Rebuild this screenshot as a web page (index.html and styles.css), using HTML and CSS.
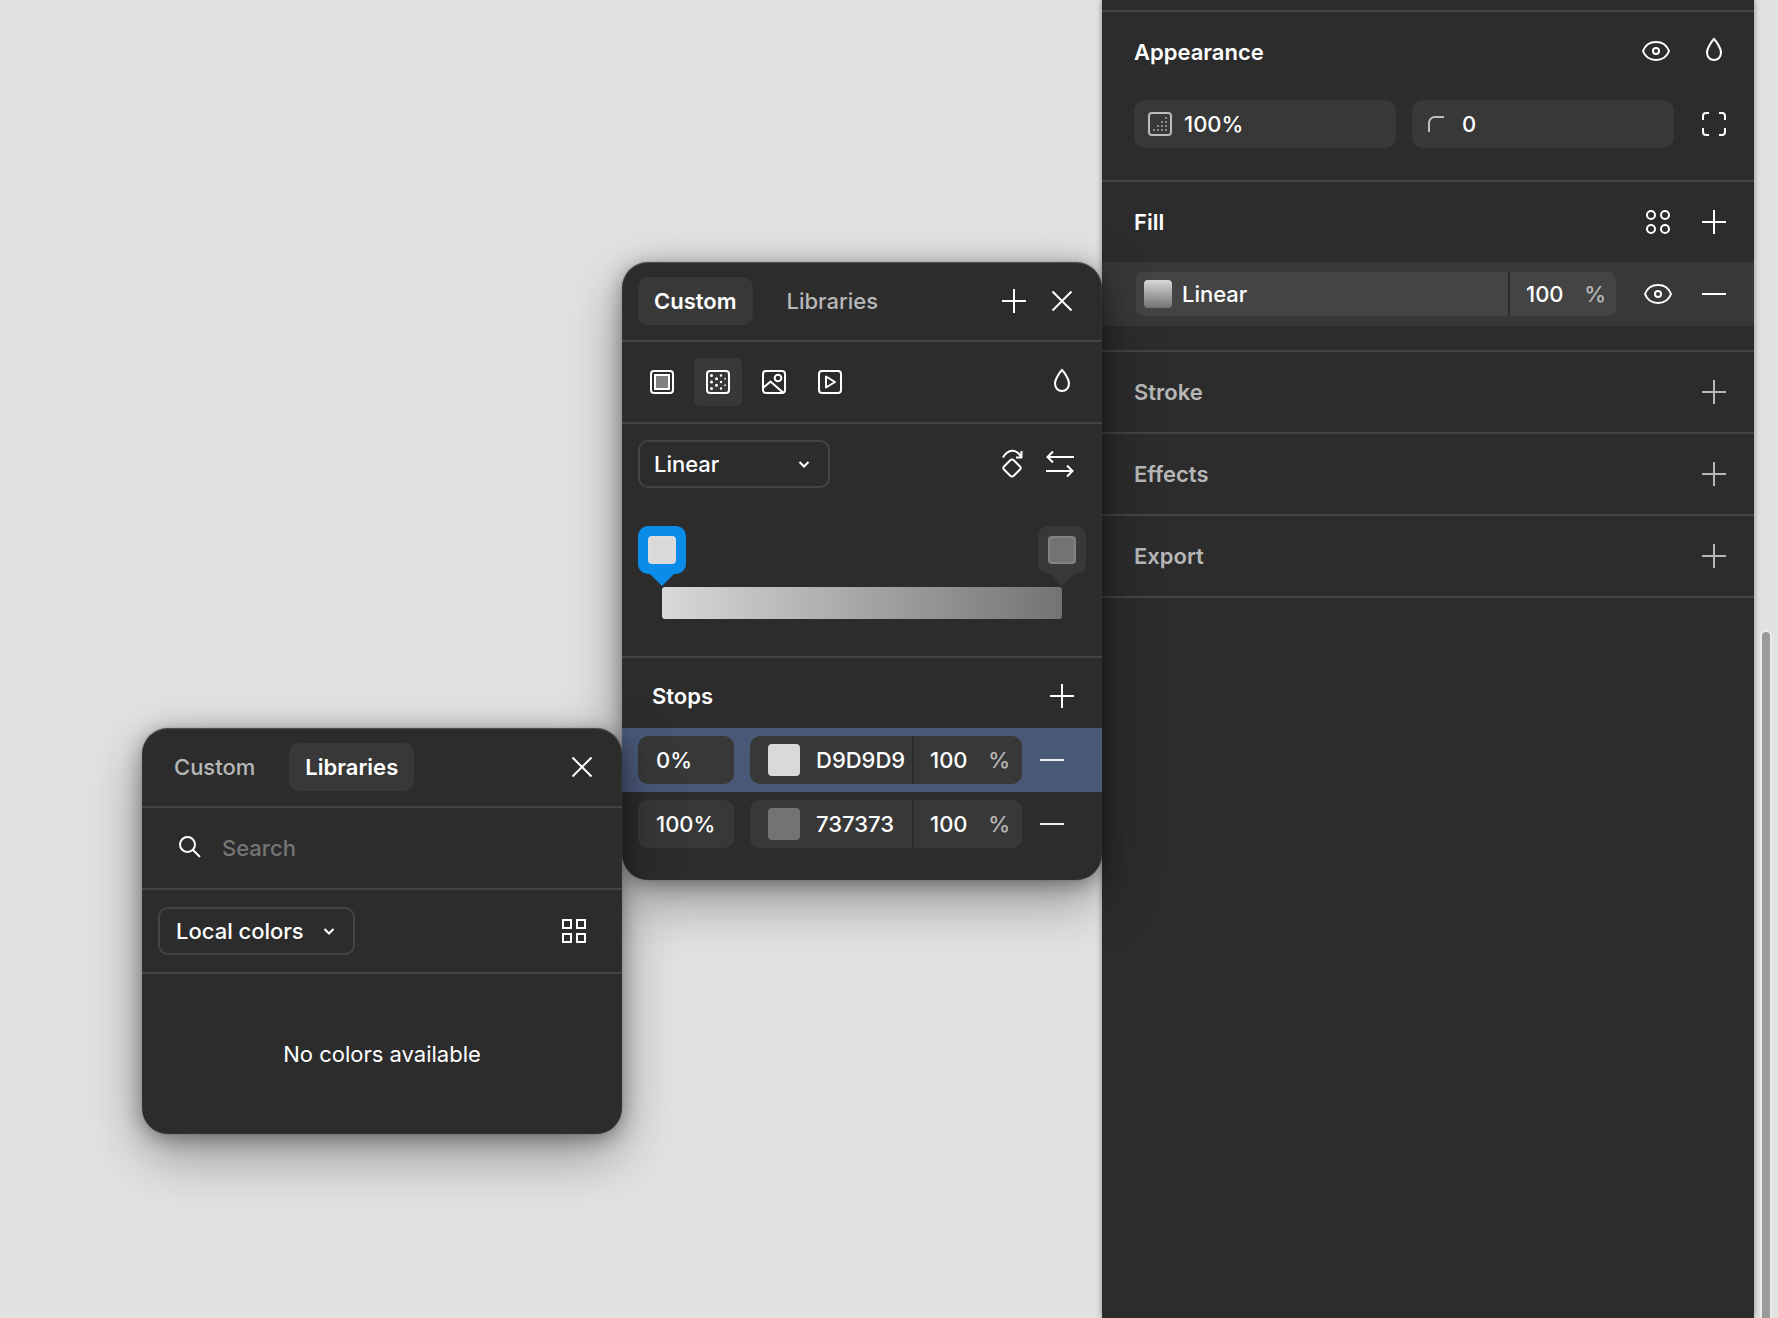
FILE: index.html
```html
<!DOCTYPE html>
<html lang="en">
<head>
<meta charset="utf-8">
<meta name="viewport" content="width=device-width, initial-scale=1">
<title>Fill editor</title>
<link rel="stylesheet" href="styles.css">
</head>
<body>
<svg class="sprite" aria-hidden="true">
  <symbol id="plus" viewBox="0 0 48 48"><path d="M24 12v24M12 24h24"/></symbol>
  <symbol id="minus" viewBox="0 0 48 48"><path d="M12 24h24"/></symbol>
  <symbol id="close" viewBox="0 0 48 48"><path d="M14.500 14.500l19 19M33.500 14.500l-19 19"/></symbol>
  <symbol id="eye" viewBox="0 0 48 48"><path d="M11 24C13 18.500 18 15 24 15s11 3.500 13 9c-2 5.500-7 9-13 9s-11-3.500-13-9z"/><circle cx="24" cy="24" r="3"/></symbol>
  <symbol id="drop" viewBox="0 0 48 48"><path d="M24 12c-1.500 1.500-7 8.500-7 13.500 0 4.500 3 7.500 7 7.500s7-3 7-7.500c0-5-5.500-12-7-13.500z"/></symbol>
  <symbol id="corners" viewBox="0 0 48 48"><path d="M13 20v-4a3 3 0 0 1 3-3h3M29 13h3a3 3 0 0 1 3 3v4M35 28v4a3 3 0 0 1-3 3h-3M19 35h-3a3 3 0 0 1-3-3v-4"/></symbol>
  <symbol id="styles" viewBox="0 0 48 48"><circle cx="17" cy="17" r="4"/><circle cx="31" cy="17" r="4"/><circle cx="17" cy="31" r="4"/><circle cx="31" cy="31" r="4"/></symbol>
  <symbol id="solid" viewBox="0 0 48 48"><rect x="13" y="13" width="22" height="22" rx="3"/><rect x="17" y="17" width="14" height="14" fill="#808080"/></symbol>
  <symbol id="gradient" viewBox="0 0 48 48"><rect x="13" y="13" width="22" height="22" rx="3"/><path stroke-width="3" stroke-linecap="round" d="M17.500 17.500h.01M17.500 24h.01M17.500 30.500h.01M22.500 20.700h.01M22.500 27.300h.01"/><path stroke-width="2.400" stroke-linecap="round" d="M27 17.500h.01M27 24h.01M27 30.500h.01"/><path stroke-width="2" stroke-linecap="round" opacity=".8" d="M31 20.700h.01M31 27.300h.01"/></symbol>
  <symbol id="image" viewBox="0 0 48 48"><rect x="13" y="13" width="22" height="22" rx="3"/><circle cx="28" cy="20" r="3.300"/><path d="M13 30l7.500-6.500L33.500 35"/></symbol>
  <symbol id="video" viewBox="0 0 48 48"><rect x="13" y="13" width="22" height="22" rx="3"/><path stroke-linejoin="round" d="M20 18.500v11l9-5.500z"/></symbol>
  <symbol id="rotate" viewBox="0 0 48 48"><path stroke-linejoin="round" d="M24 19.500c1 0 1.500.5 2 1l6 6c1 1 1 2 0 3l-6 6c-1.200 1.200-2.800 1.200-4 0l-6-6c-1-1-1-2 0-3l6-6c.5-.5 1-1 2-1zM15 17.500c5-8.500 13-9 18-1M33.500 11v6.500H28"/></symbol>
  <symbol id="swap" viewBox="0 0 48 48"><path d="M38 17H11M17 11.500L11.500 17l5.500 5.500M10 31h27M31 25.500l5.500 5.500-5.500 5.500"/></symbol>
  <symbol id="search" viewBox="0 0 48 48"><circle cx="21.500" cy="20.500" r="7.500"/><path d="M27 26l7 7"/></symbol>
  <symbol id="grid" viewBox="0 0 48 48"><path d="M13 13h8v8h-8zM27 13h8v8h-8zM13 27h8v8h-8zM27 27h8v8h-8z"/></symbol>
  <symbol id="opacity" viewBox="0 0 24 24"><rect x="1" y="1" width="22" height="22" rx="3"/><path stroke="#888" stroke-dasharray="2 2" d="M17 6h2M13 10h6M9 14h10M5 18h14"/></symbol>
  <symbol id="radius" viewBox="0 0 24 24"><path d="M3 20v-9a6 6 0 0 1 6-6h9"/></symbol>
  <symbol id="chevron" viewBox="0 0 12 12"><path d="M1.500 4L6 8.500 10.500 4"/></symbol>
</svg>

<main class="canvas">
  <section class="popover popover-custom" aria-label="Custom fill">
    <header class="bar tabs">
      <button class="tab is-active">Custom</button>
      <button class="tab">Libraries</button>
      <span class="spacer"></span>
      <button class="icon" aria-label="Create style"><svg><use href="#plus"/></svg></button>
      <button class="icon" aria-label="Close"><svg><use href="#close"/></svg></button>
    </header>
    <div class="bar kinds">
      <button class="icon" aria-label="Solid"><svg><use href="#solid"/></svg></button>
      <button class="icon is-active" aria-label="Gradient"><svg><use href="#gradient"/></svg></button>
      <button class="icon" aria-label="Image"><svg><use href="#image"/></svg></button>
      <button class="icon" aria-label="Video"><svg><use href="#video"/></svg></button>
      <span class="spacer"></span>
      <button class="icon" aria-label="Blend mode"><svg><use href="#drop"/></svg></button>
    </div>
    <div class="gradient-editor">
      <div class="gradient-tools">
        <div class="dropdown type">
          <select aria-label="Gradient type"><option>Linear</option></select>
          <svg class="chevron"><use href="#chevron"/></svg>
        </div>
        <span class="spacer"></span>
        <button class="icon" aria-label="Rotate gradient"><svg><use href="#rotate"/></svg></button>
        <button class="icon" aria-label="Flip gradient"><svg><use href="#swap"/></svg></button>
      </div>
      <div class="handles">
        <button class="handle is-selected" aria-label="Stop at 0%"><span class="chip light"></span></button>
        <button class="handle" aria-label="Stop at 100%"><span class="chip dark"></span></button>
      </div>
      <div class="ramp"></div>
    </div>
    <div class="stops-head">
      <h2>Stops</h2>
      <button class="icon" aria-label="Add stop"><svg><use href="#plus"/></svg></button>
    </div>
    <ul class="stops">
      <li class="stop is-selected">
        <input class="position" aria-label="Position" value="0%">
        <div class="color">
          <span class="swatch light"></span>
          <input class="hex" aria-label="Color" value="D9D9D9">
          <label class="alpha"><input aria-label="Opacity" value="100"><span>%</span></label>
        </div>
        <button class="icon remove" aria-label="Remove stop"><svg><use href="#minus"/></svg></button>
      </li>
      <li class="stop">
        <input class="position" aria-label="Position" value="100%">
        <div class="color">
          <span class="swatch dark"></span>
          <input class="hex" aria-label="Color" value="737373">
          <label class="alpha"><input aria-label="Opacity" value="100"><span>%</span></label>
        </div>
        <button class="icon remove" aria-label="Remove stop"><svg><use href="#minus"/></svg></button>
      </li>
    </ul>
  </section>

  <section class="popover popover-libraries" aria-label="Libraries">
    <header class="bar tabs">
      <button class="tab">Custom</button>
      <button class="tab is-active">Libraries</button>
      <span class="spacer"></span>
      <button class="icon" aria-label="Close"><svg><use href="#close"/></svg></button>
    </header>
    <label class="bar search">
      <svg class="icon"><use href="#search"/></svg>
      <input type="text" placeholder="Search" aria-label="Search">
    </label>
    <div class="bar source">
      <div class="dropdown library">
        <select aria-label="Library"><option>Local colors</option></select>
        <svg class="chevron"><use href="#chevron"/></svg>
      </div>
      <span class="spacer"></span>
      <button class="icon" aria-label="Show as grid"><svg><use href="#grid"/></svg></button>
    </div>
    <p class="empty">No colors available</p>
  </section>
</main>

<aside class="sidebar">
  <section class="group appearance">
    <header class="group-head">
      <h2>Appearance</h2>
      <button class="icon" aria-label="Visibility"><svg><use href="#eye"/></svg></button>
      <button class="icon" aria-label="Blend mode"><svg><use href="#drop"/></svg></button>
    </header>
    <div class="fields">
      <label class="field"><svg><use href="#opacity"/></svg><input aria-label="Opacity" value="100%"></label>
      <label class="field"><svg><use href="#radius"/></svg><input aria-label="Corner radius" value="0"></label>
      <button class="icon" aria-label="Individual corners"><svg><use href="#corners"/></svg></button>
    </div>
  </section>
  <section class="group fill">
    <header class="group-head">
      <h2>Fill</h2>
      <button class="icon" aria-label="Styles"><svg><use href="#styles"/></svg></button>
      <button class="icon" aria-label="Add fill"><svg><use href="#plus"/></svg></button>
    </header>
    <div class="fill-row">
      <div class="paint">
        <button class="paint-name"><span class="paint-chip"></span>Linear</button>
        <label class="alpha"><input aria-label="Fill opacity" value="100"><span>%</span></label>
      </div>
      <button class="icon" aria-label="Toggle fill"><svg><use href="#eye"/></svg></button>
      <button class="icon" aria-label="Remove fill"><svg><use href="#minus"/></svg></button>
    </div>
  </section>
  <section class="group collapsed">
    <header class="group-head"><h2>Stroke</h2><button class="icon" aria-label="Add stroke"><svg><use href="#plus"/></svg></button></header>
  </section>
  <section class="group collapsed">
    <header class="group-head"><h2>Effects</h2><button class="icon" aria-label="Add effect"><svg><use href="#plus"/></svg></button></header>
  </section>
  <section class="group collapsed">
    <header class="group-head"><h2>Export</h2><button class="icon" aria-label="Add export"><svg><use href="#plus"/></svg></button></header>
  </section>
</aside>

<div class="gutter"><span class="thumb"></span></div>
</body>
</html>
```
FILE: styles.css
```css
:root {
  --bg: #2c2c2c;
  --raised: #383838;
  --line: #444444;
  --muted: #b8b8b8;
  --canvas: #e2e2e2;
}

* { box-sizing: border-box; }

body {
  margin: 0;
  min-height: 100vh;
  display: flex;
  background: var(--canvas);
  color: #ffffff;
  font: 500 22px/32px Inter, "Liberation Sans", sans-serif;
  overflow: hidden;
}

h2, p, ul { margin: 0; padding: 0; }
ul { list-style: none; }
h2 { font-size: 22px; font-weight: 600; flex: 1; }

button, input, select {
  font: inherit;
  color: inherit;
  background: none;
  border: 0;
  padding: 0;
  margin: 0;
  outline: 0;
  min-width: 0;
}

svg { fill: none; stroke: currentColor; stroke-width: 2; }
.sprite { position: absolute; width: 0; height: 0; }

.spacer { flex: 1; }

.icon {
  flex: none;
  display: block;
  width: 48px;
  height: 48px;
  border-radius: 6px;
}
.icon svg { display: block; width: 48px; height: 48px; }
.icon.is-active { background: var(--raised); }

/* Canvas and popovers */

.canvas { flex: 1; position: relative; z-index: 1; }

.popover {
  position: absolute;
  width: 480px;
  background: var(--bg);
  border-radius: 26px;
  box-shadow:
    0 20px 56px rgba(0, 0, 0, .36),
    0 4px 20px rgba(0, 0, 0, .35),
    0 0 1px rgba(0, 0, 0, .5);
}
.popover::after {
  content: "";
  position: absolute;
  inset: 0;
  border-radius: inherit;
  box-shadow: inset 0 1px 1px rgba(255, 255, 255, .16), inset 0 0 1px rgba(255, 255, 255, .2);
  pointer-events: none;
}
.popover-custom { top: 262px; right: 0; }
.popover-libraries { top: 728px; right: 480px; }

.bar {
  display: flex;
  align-items: center;
  padding: 0 16px;
  height: 82px;
  border-bottom: 2px solid var(--line);
}
.tabs { height: 80px; }

.tab {
  height: 48px;
  padding: 0 16px;
  border-radius: 10px;
  color: var(--muted);
}
.tab + .tab { margin-left: 18px; }
.tab.is-active { background: var(--raised); color: #ffffff; font-weight: 600; }

.kinds { gap: 8px; }

.gradient-editor { padding: 16px 16px 37px; border-bottom: 2px solid var(--line); }
.gradient-tools { display: flex; padding-right: 2px; }

.dropdown { position: relative; }
.dropdown select {
  appearance: none;
  width: 100%;
  height: 48px;
  padding: 0 14px;
  border: 2px solid var(--line);
  border-radius: 10px;
}
.type { width: 192px; }
.library { width: 197px; }
.library select { padding: 0 16px; }
.chevron {
  position: absolute;
  top: 18px;
  right: 20px;
  width: 12px;
  height: 12px;
  pointer-events: none;
}

.handles { display: flex; justify-content: space-between; margin-top: 38px; }
.handle {
  position: relative;
  width: 48px;
  height: 48px;
  padding: 10px;
  border-radius: 10px;
  background: var(--raised);
}
.handle::after {
  content: "";
  position: absolute;
  top: 100%;
  left: 12px;
  border: 12px solid transparent;
  border-top-color: var(--raised);
  border-bottom: 0;
}
.handle.is-selected { background: #0c8ce9; }
.handle.is-selected::after { border-top-color: #0c8ce9; }
.chip {
  display: block;
  width: 28px;
  height: 28px;
  border-radius: 4px;
  border: 2px solid rgba(255, 255, 255, .1);
}
.light { background-color: #d9d9d9; }
.dark { background-color: #737373; }

.ramp {
  height: 32px;
  margin: 13px 24px 0;
  border-radius: 3px;
  background: linear-gradient(90deg, #d9d9d9, #737373);
}

.stops-head { display: flex; align-items: center; padding: 14px 16px 8px 30px; }
.stops { padding-bottom: 24px; }
.stop { display: flex; align-items: center; height: 64px; padding: 0 16px; }
.stop.is-selected { background: #4a5878; }
.position {
  width: 96px;
  height: 48px;
  padding: 0 18px;
  border-radius: 10px;
  background: var(--raised);
}
.color {
  display: flex;
  align-items: center;
  width: 272px;
  height: 48px;
  margin-left: 16px;
  padding-left: 18px;
  border-radius: 10px;
  background: var(--raised);
}
.swatch { width: 32px; height: 32px; border-radius: 4px; }
.hex { flex: 1; margin-left: 16px; }
.remove { margin-left: 6px; }
.remove svg { stroke: #eeeeee; }

.alpha {
  flex: none;
  display: flex;
  align-items: center;
  justify-content: space-between;
  width: 110px;
  height: 100%;
  padding: 0 12px 0 16px;
  border-left: 2px solid var(--bg);
}
.alpha input { width: 48px; }
.alpha span { color: var(--muted); }

.search { padding-left: 24px; }
.search input { flex: 1; margin-left: 8px; }
.search input::placeholder { color: #757575; opacity: 1; }
.source { height: 84px; padding-right: 24px; }
.empty { padding: 64px 16px; text-align: center; font-weight: 400; }

/* Properties sidebar */

.sidebar {
  flex: none;
  width: 652px;
  padding-top: 10px;
  background: var(--bg);
  box-shadow: 0 0 6px rgba(0, 0, 0, .4);
}
.group:first-child { border-top: 2px solid var(--line); }
.group { border-bottom: 2px solid var(--line); }
.group-head { display: flex; align-items: center; gap: 8px; height: 80px; padding: 0 16px 0 32px; }
.appearance .group-head { gap: 10px; }
.appearance .group-head .icon { margin-bottom: 2px; }
.collapsed { color: var(--muted); }

.fields {
  display: grid;
  grid-template-columns: minmax(0, 1fr) minmax(0, 1fr) 48px;
  gap: 16px;
  padding: 8px 16px 32px 32px;
}
.field {
  display: flex;
  align-items: center;
  gap: 12px;
  height: 48px;
  padding: 0 14px;
  border-radius: 10px;
  background: var(--raised);
}
.field svg { flex: none; width: 24px; height: 24px; stroke: #bdbdbd; }
.field input { flex: 1; }

.fill { padding-bottom: 24px; }
.fill-row {
  display: flex;
  align-items: center;
  gap: 8px;
  height: 64px;
  padding: 0 16px 0 34px;
  background: var(--raised);
}
.paint {
  flex: 1;
  display: flex;
  height: 44px;
  margin-right: 10px;
  border-radius: 8px;
  background: var(--line);
}
.paint-name { flex: 1; display: flex; align-items: center; gap: 10px; padding-left: 8px; }
.paint .alpha { width: 108px; padding-right: 10px; }
.paint-chip {
  width: 28px;
  height: 28px;
  border-radius: 4px;
  background: linear-gradient(#d9d9d9, #737373);
}

/* Scroll gutter */

.gutter { flex: none; display: flex; width: 24px; padding: 632px 0 0 8px; }
.thumb {
  width: 8px;
  border-radius: 4px 4px 0 0;
  background: #9a9a9a;
  box-shadow: 0 0 0 2px #ebebeb;
}
```
